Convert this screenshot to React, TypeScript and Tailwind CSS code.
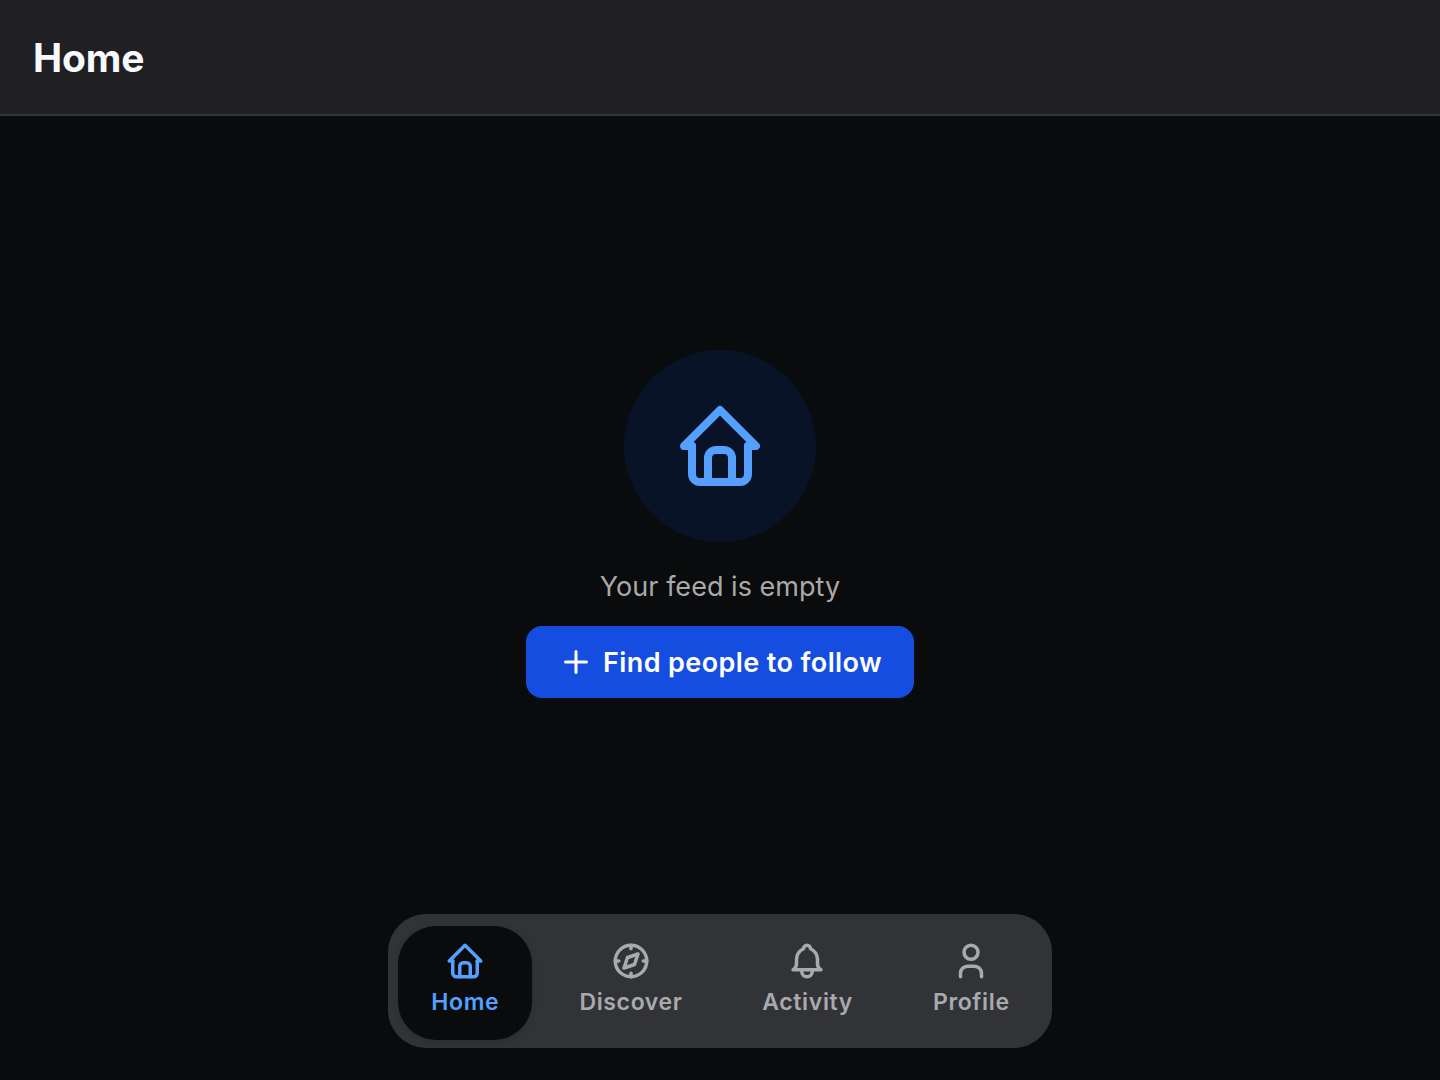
import type { ReactNode } from "react";

type IconProps = { className: string; children: ReactNode };

function Icon({ className, children }: IconProps) {
  return (
    <svg
      viewBox="0 0 24 24"
      className={className}
      fill="none"
      stroke="currentColor"
      strokeWidth={2}
      strokeLinecap="round"
      strokeLinejoin="round"
    >
      {children}
    </svg>
  );
}

const home = (
  <>
    <path d="M5 12h-2l9 -9l9 9h-2" />
    <path d="M5 12v7a2 2 0 0 0 2 2h10a2 2 0 0 0 2 -2v-7" />
    <path d="M9 21v-6a2 2 0 0 1 2 -2h2a2 2 0 0 1 2 2v6" />
  </>
);

const compass = (
  <>
    <path d="M8 16l2 -6l6 -2l-2 6l-6 2" />
    <circle cx="12" cy="12" r="9" />
    <path d="M12 3v2M12 19v2M3 12h2M19 12h2" />
  </>
);

const bell = (
  <>
    <path d="M10 5a2 2 0 1 1 4 0a7 7 0 0 1 4 6v3a4 4 0 0 0 2 3h-16a4 4 0 0 0 2 -3v-3a7 7 0 0 1 4 -6" />
    <path d="M9 17v1a3 3 0 0 0 6 0v-1" />
  </>
);

const user = (
  <>
    <circle cx="12" cy="7" r="4" />
    <path d="M6 21v-2a4 4 0 0 1 4 -4h4a4 4 0 0 1 4 4v2" />
  </>
);

const tabs = [
  { label: "Home", icon: home, box: "w-[134px] rounded-[38px] bg-[#090b0c] text-[#559fff] shadow-[0_2px_6px_rgba(0,0,0,0.15)]" },
  { label: "Discover", icon: compass, box: "w-[168px] text-[#a9aaad]" },
  { label: "Activity", icon: bell, box: "w-[156px] text-[#a9aaad]" },
  { label: "Profile", icon: user, box: "w-[142px] text-[#a9aaad]" },
];

export default function App() {
  return (
    <div className="flex h-[1080px] w-full flex-col overflow-hidden bg-[#090b0c] font-[Inter,sans-serif]">
      <header className="flex h-[116px] shrink-0 items-center border-b-2 border-[#333436] bg-[#202022] px-[33px] pt-[2px]">
        <h1 className="text-[39px] leading-[48px] font-bold tracking-[-0.15px] text-[#f8f9ff]">Home</h1>
      </header>

      <main className="flex flex-1 flex-col items-center pt-[234px]">
        <div className="flex size-48 items-center justify-center rounded-full bg-[#081328] text-[#559fff]">
          <Icon className="size-24">{home}</Icon>
        </div>
        <p className="mt-[25px] text-[27px] leading-10 tracking-[0.03px] whitespace-nowrap text-[#a9a9a9]">Your feed is empty</p>
        <button className="mt-[19px] flex h-[72px] w-[388px] items-center rounded-2xl bg-[#154de0] pl-8 text-white">
          <Icon className="size-9"><path d="M12 5v14M5 12h14" /></Icon>
          <span className="ml-[9px] pt-[2px] text-[27px] leading-10 font-semibold tracking-[0.4px] whitespace-nowrap">Find people to follow</span>
        </button>
      </main>

      <nav className="mb-8 flex h-[134px] w-[664px] shrink-0 justify-between self-center rounded-[38px] bg-[#323336] px-[10px] pt-3 pb-2">
        {tabs.map((tab) => (
          <a key={tab.label} className={`flex flex-col items-center pt-[14px] ${tab.box}`}>
            <Icon className="size-[42px]">{tab.icon}</Icon>
            <span className="mt-1 pl-[0.7px] text-[23px] leading-8 font-semibold tracking-[0.65px]">{tab.label}</span>
          </a>
        ))}
      </nav>
    </div>
  );
}
